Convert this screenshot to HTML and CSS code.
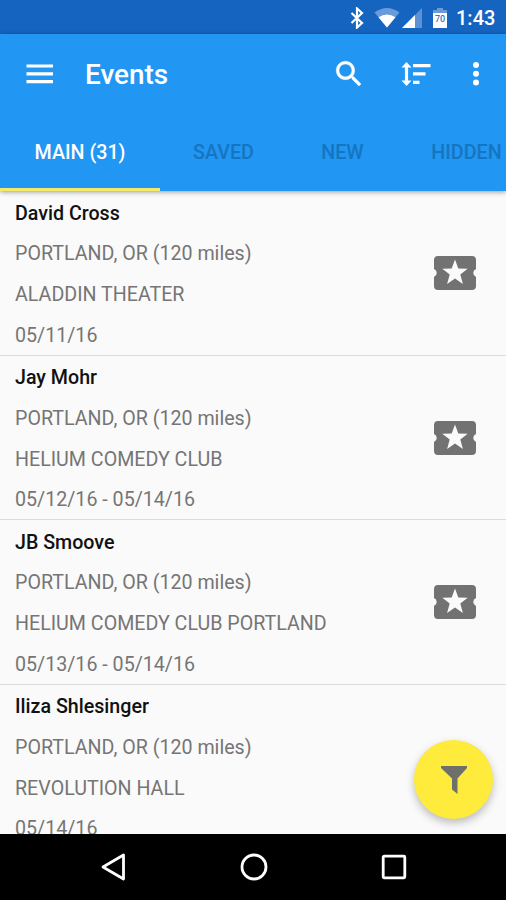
FILE: index.html
```html
<!DOCTYPE html>
<html lang="en">
<head>
<meta charset="utf-8">
<title>Events</title>
<link rel="stylesheet" href="styles.css">
</head>
<body>
<div class="screen">
  <div class="statusbar">
    <svg class="st-bt" width="14" height="22" viewBox="0 0 14 22"><path d="M1.500 6l10.500 10-5 4.500V1.500L12 6 1.500 16" fill="none" stroke="#fff" stroke-width="2.200"/></svg>
    <svg class="st-wifi" width="26" height="20" viewBox="0 0 26 20"><path d="M0.500 4.500Q13-4.500 25.500 4.500L13 19.500z" fill="#6a9bd8"/><path d="M4.500 9.300Q13 3.500 21.500 9.300L13 19.500z" fill="#fff"/></svg>
    <svg class="st-cell" width="20" height="20" viewBox="0 0 20 20"><path d="M20 0v20H0z" fill="#5c92d5"/><path d="M13 7v13H0z" fill="#fff"/></svg>
    <div class="battery">
      <svg width="14" height="20" viewBox="0 0 14 20"><path d="M4 0h6v2h4v4H0V2h4z" fill="#6a9bd8"/><path d="M0 5h14v15H0z" fill="#fff"/></svg>
      <span class="level">70</span>
    </div>
    <span class="clock">1:43</span>
  </div>
  <header class="appbar">
    <div class="toolbar">
      <svg class="menu" width="28" height="20" viewBox="0 0 28 20"><path d="M.5 2h26.500M.5 9.800h26.500M.5 17.600h26.500" stroke="#fff" stroke-width="3.200"/></svg>
      <h1>Events</h1>
      <svg class="search" width="34" height="34" viewBox="0 0 24 24"><path fill="#fff" stroke="#fff" stroke-width=".3" d="M15.500 14h-.79l-.28-.27C15.410 12.590 16 11.110 16 9.500 16 5.910 13.090 3 9.500 3S3 5.910 3 9.500 5.910 16 9.500 16c1.610 0 3.090-.59 4.230-1.570l.27.28v.79l5 4.990L20.490 19l-4.990-5zm-6 0C7.010 14 5 11.990 5 9.500S7.010 5 9.500 5 14 7.010 14 9.500 11.990 14 9.500 14z"/></svg>
      <svg class="sort" width="30" height="26" viewBox="0 0 30 26"><path d="M5.500 4v18" stroke="#fff" stroke-width="3.200"/><path d="M5.500 1l5 5.500H.5zM5.500 25l5-5.500H.5zM12 3h17.500v3.300H12zM12 11.300h12.500v3.300H12zM12 19.700h6.500V23H12z" fill="#fff"/></svg>
      <svg class="more" width="8" height="26" viewBox="0 0 8 26"><g fill="#fff"><circle cx="4" cy="4" r="3"/><circle cx="4" cy="12.700" r="3"/><circle cx="4" cy="21.400" r="3"/></g></svg>
    </div>
    <nav class="tabs">
      <span class="tab active">MAIN (31)</span>
      <span class="tab saved">SAVED</span>
      <span class="tab new">NEW</span>
      <span class="tab hidden">HIDDEN</span>
    </nav>
  </header>
  <main class="list">
    <article class="row">
      <div class="info"><h2>David Cross</h2><p>PORTLAND, OR (120 miles)</p><p>ALADDIN THEATER</p><p>05/11/16</p></div>
      <svg class="ticket" width="44" height="36" viewBox="0 0 44 36"><path fill="#727272" fill-rule="evenodd" d="M5 1h34q4 0 4 4v9a4.300 4.300 0 0 0 0 8v9q0 4-4 4H5q-4 0-4-4v-9a4.300 4.300 0 0 0 0-8V5q0-4 4-4zM22 4.500l-3.300 9-9.400.3 7.400 5.800-2.600 9.300 7.900-5.400 7.900 5.400-2.600-9.300 7.400-5.800-9.400-.3z"/></svg>
    </article>
    <article class="row">
      <div class="info"><h2>Jay Mohr</h2><p>PORTLAND, OR (120 miles)</p><p>HELIUM COMEDY CLUB</p><p>05/12/16 - 05/14/16</p></div>
      <svg class="ticket" width="44" height="36" viewBox="0 0 44 36"><path fill="#727272" fill-rule="evenodd" d="M5 1h34q4 0 4 4v9a4.300 4.300 0 0 0 0 8v9q0 4-4 4H5q-4 0-4-4v-9a4.300 4.300 0 0 0 0-8V5q0-4 4-4zM22 4.500l-3.300 9-9.400.3 7.400 5.800-2.600 9.300 7.900-5.400 7.900 5.400-2.600-9.300 7.400-5.800-9.400-.3z"/></svg>
    </article>
    <article class="row">
      <div class="info"><h2>JB Smoove</h2><p>PORTLAND, OR (120 miles)</p><p>HELIUM COMEDY CLUB PORTLAND</p><p>05/13/16 - 05/14/16</p></div>
      <svg class="ticket" width="44" height="36" viewBox="0 0 44 36"><path fill="#727272" fill-rule="evenodd" d="M5 1h34q4 0 4 4v9a4.300 4.300 0 0 0 0 8v9q0 4-4 4H5q-4 0-4-4v-9a4.300 4.300 0 0 0 0-8V5q0-4 4-4zM22 4.500l-3.300 9-9.400.3 7.400 5.800-2.600 9.300 7.900-5.400 7.900 5.400-2.600-9.300 7.400-5.800-9.400-.3z"/></svg>
    </article>
    <article class="row">
      <div class="info"><h2>Iliza Shlesinger</h2><p>PORTLAND, OR (120 miles)</p><p>REVOLUTION HALL</p><p>05/14/16</p></div>
    </article>
    <div class="fab"><svg width="28" height="30" viewBox="0 0 28 30"><path d="M1 1h26v2l-9.500 10.500V29L12 24.500V13.500L1 3z" fill="#70706a"/></svg></div>
  </main>
  <footer class="navbar">
    <svg width="26" height="30" viewBox="0 0 26 30"><path d="M23.500 3v24L3 15z" fill="none" stroke="#fff" stroke-width="2.800" stroke-linejoin="round"/></svg>
    <svg width="28" height="28" viewBox="0 0 28 28"><circle cx="14" cy="14" r="12" fill="none" stroke="#fff" stroke-width="2.800"/></svg>
    <svg width="26" height="26" viewBox="0 0 26 26"><rect x="2.200" y="2.200" width="21.600" height="21.600" rx="1" fill="none" stroke="#fff" stroke-width="2.800"/></svg>
  </footer>
</div>
</body>
</html>
```
FILE: styles.css
```css
* { box-sizing: border-box; }
body { margin: 0; font-family: Roboto, sans-serif; }
h1, h2, p { margin: 0; }
svg { display: block; flex: none; }
.screen { width: 506px; height: 900px; display: flex; flex-direction: column; overflow: hidden; background: #fafafa; }
.statusbar { height: 34px; flex: none; display: flex; align-items: center; background: #1565c0; color: #fff; padding: 1px 0 0 350px; }
.st-wifi { margin-left: 10px; }
.st-cell { margin-left: 2px; }
.battery { position: relative; margin-left: 11px; }
.level { position: absolute; left: 0; top: 6px; width: 14px; text-align: center; font-size: 9px; line-height: 10px; font-weight: 500; color: #3875c4; }
.clock { margin-left: 9px; font-size: 20px; font-weight: 500; line-height: 34px; white-space: nowrap; }
.appbar { position: relative; z-index: 1; height: 157px; flex: none; background: #2196f3; color: #fff; box-shadow: 0 1px 5px rgba(0,0,0,.4); }
.toolbar { height: 79px; display: flex; align-items: center; padding-left: 26px; }
.menu { width: 28px; }
h1 { margin: 3px 0 0 31px; width: 247px; font-size: 27.900px; font-weight: 500; line-height: 36px; }
.sort { margin-left: 35px; }
.more { margin-left: 41px; }
.tabs { height: 78px; display: flex; overflow: hidden; }
.tab { flex: none; line-height: 80px; height: 78px; font-size: 19.700px; font-weight: 500; color: #1675c1; white-space: nowrap; text-align: center; }
.tab.active { width: 160px; color: #fff; border-bottom: 3px solid #f3e96b; }
.tab.saved { width: 127px; }
.tab.new { width: 111px; }
.tab.hidden { width: 137px; }
.list { position: relative; flex: 1; min-height: 0; overflow: hidden; }
.row { height: 164.500px; display: flex; align-items: center; justify-content: space-between; padding: 0 29px 0 15px; border-bottom: 1.400px solid #dcdcdc; }
.info { height: 163px; padding-top: 2.500px; }
.ticket { margin-top: 1px; }
h2, p { font-size: 19.650px; line-height: 40.700px; white-space: nowrap; }
h2 { font-weight: 500; color: #111; }
p { font-weight: 400; color: #757575; }
.fab { position: absolute; right: 13px; bottom: 15px; width: 79px; height: 79px; border-radius: 50%; background: #ffeb3b; display: flex; align-items: center; justify-content: center; box-shadow: 0 4px 9px rgba(0,0,0,.25); }
.navbar { height: 66px; flex: none; background: #000; display: flex; align-items: center; justify-content: space-between; padding: 0 99px 0 100px; }
```
